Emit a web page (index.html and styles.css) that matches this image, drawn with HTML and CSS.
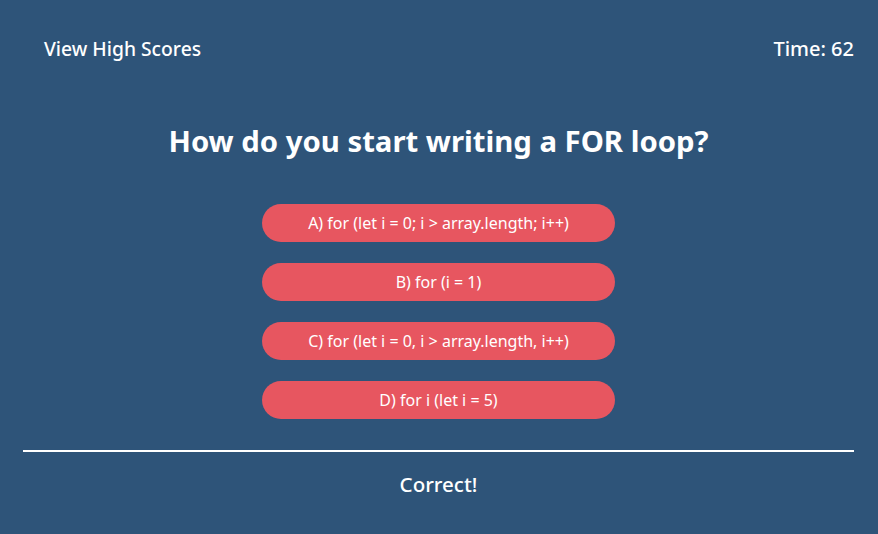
FILE: index.html
```html
<!DOCTYPE html>
<html>
<head>
<meta charset="utf-8">
<link rel="stylesheet" href="styles.css">
</head>
<body>
<div class="page">
  <header class="top">
    <a class="scores">View High Scores</a>
    <span class="timer">Time: 62</span>
  </header>
  <main class="quiz">
    <h1 class="question">How do you start writing a FOR loop?</h1>
    <div class="choices">
      <button class="choice">A) for (let i = 0; i &gt; array.length; i++)</button>
      <button class="choice">B) for (i = 1)</button>
      <button class="choice">C) for (let i = 0, i &gt; array.length, i++)</button>
      <button class="choice">D) for i (let i = 5)</button>
    </div>
  </main>
  <footer class="result">
    <p class="feedback">Correct!</p>
  </footer>
</div>
</body>
</html>
```
FILE: styles.css
```css
html, body {
  margin: 0;
  padding: 0;
  background: #2e5479;
  height: 100%;
}
body {
  font-family: "Noto Sans", "DejaVu Sans", sans-serif;
  color: #ffffff;
}
.page {
  padding: 0 24px 0 23px;
}
.top {
  display: flex;
  justify-content: space-between;
  align-items: center;
  padding: 35px 0 0 21px;
  height: 26px;
  font-size: 19.3px;
  font-weight: 500;
}
.scores { color: #fff; }
.timer { font-size: 20px; }
.quiz {
  display: flex;
  flex-direction: column;
  align-items: center;
}
.question {
  margin: 62px 0 0;
  font-size: 29.3px;
  font-weight: bold;
  line-height: 36px;
}
.choices {
  display: flex;
  flex-direction: column;
  gap: 21px;
  margin-top: 45px;
  padding-bottom: 31px;
  border-bottom: 2px solid #fff;
  width: 100%;
  align-items: center;
}
.choice {
  width: 353px;
  height: 38px;
  border: none;
  border-radius: 19px;
  background: #e75660;
  color: #fff;
  font-family: inherit;
  font-size: 16px;
  padding: 0;
}
.result { text-align: center; }
.feedback {
  margin: 19px 0 0;
  font-size: 20.5px;
  line-height: 26px;
  font-weight: 500;
}
```
